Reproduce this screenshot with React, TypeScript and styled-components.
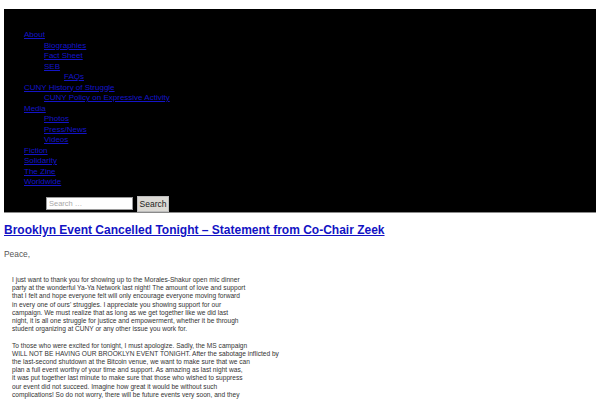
import React from "react";
import styled, { createGlobalStyle } from "styled-components";

type NavItem = { label: string; level: number };

const navItems: NavItem[] = [
  { label: "About", level: 0 },
  { label: "Biographies", level: 1 },
  { label: "Fact Sheet", level: 1 },
  { label: "SEB", level: 1 },
  { label: "FAQs", level: 2 },
  { label: "CUNY History of Struggle", level: 0 },
  { label: "CUNY Policy on Expressive Activity", level: 1 },
  { label: "Media", level: 0 },
  { label: "Photos", level: 1 },
  { label: "Press/News", level: 1 },
  { label: "Videos", level: 1 },
  { label: "Fiction", level: 0 },
  { label: "Solidarity", level: 0 },
  { label: "The Zine", level: 0 },
  { label: "Worldwide", level: 0 },
];

const paragraphs: string[][] = [
  [
    "I just want to thank you for showing up to the Morales-Shakur open mic dinner",
    "party at the wonderful Ya-Ya Network last night! The amount of love and support",
    "that I felt and hope everyone felt will only encourage everyone moving forward",
    "in every one of ours' struggles. I appreciate you showing support for our",
    "campaign. We must realize that as long as we get together like we did last",
    "night, it is all one struggle for justice and empowerment, whether it be through",
    "student organizing at CUNY or any other issue you work for.",
  ],
  [
    "To those who were excited for tonight, I must apologize. Sadly, the MS campaign",
    "WILL NOT BE HAVING OUR BROOKLYN EVENT TONIGHT. After the sabotage inflicted by",
    "the last-second shutdown at the Bitcoin venue, we want to make sure that we can",
    "plan a full event worthy of your time and support. As amazing as last night was,",
    "it was put together last minute to make sure that those who wished to suppress",
    "our event did not succeed. Imagine how great it would be without such",
    "complications! So do not worry, there will be future events very soon, and they",
  ],
];

const App: React.FC<{}> = () => {
  return (
    <Page>
      <GlobalStyle />
      <Header>
        <NavList>
          {navItems.map((item) => {
            return (
              <NavEntry key={item.label} level={item.level}>
                <NavLink href="#">{item.label}</NavLink>
              </NavEntry>
            );
          })}
        </NavList>
        <SearchForm>
          <SearchInput placeholder="Search …" />
          <SearchButton type="button">Search</SearchButton>
        </SearchForm>
      </Header>
      <Article>
        <Title>
          <TitleLink href="#">
            Brooklyn Event Cancelled Tonight – Statement from Co-Chair Zeek
          </TitleLink>
        </Title>
        <Greeting>Peace,</Greeting>
        <Body>
          {paragraphs.map((lines, i) => {
            return (
              <Paragraph key={i}>
                {lines.map((line) => {
                  return <Line key={line}>{line}</Line>;
                })}
              </Paragraph>
            );
          })}
        </Body>
      </Article>
    </Page>
  );
};

export default App;

const GlobalStyle = createGlobalStyle`
  html, body {
    margin: 0;
    padding: 0;
    background: #ffffff;
    font-family: "Liberation Sans", Arial, sans-serif;
  }
`;

const Page = styled.div`
  width: 600px;
  height: 400px;
  overflow: hidden;
  padding-top: 9px;
  box-sizing: border-box;
`;

const Header = styled.header`
  margin: 0 4px;
  height: 204px;
  box-sizing: border-box;
  background: #000000;
  border-bottom: 1px solid #8a8a8a;
  padding-top: 21px;
`;

const NavList = styled.ul`
  list-style: none;
  margin: 0;
  padding: 0 0 0 20px;
`;

const NavEntry = styled.li<{ level: number }>`
  padding-left: ${(p) => p.level * 20}px;
  font-size: 8px;
  line-height: 10.5px;
  height: 10.5px;
  white-space: nowrap;
`;

const NavLink = styled.a`
  color: #1414c8;
  text-decoration: underline;
`;

const SearchForm = styled.form`
  display: flex;
  align-items: center;
  gap: 4px;
  margin: 8px 0 0 42px;
`;

const SearchInput = styled.input`
  width: 87px;
  height: 13px;
  box-sizing: border-box;
  border: 1px solid #9a9a9a;
  background: #ffffff;
  padding: 0 2px;
  font-family: "Liberation Sans", Arial, sans-serif;
  font-size: 7.5px;
  &::placeholder {
    color: #a8a8a8;
  }
`;

const SearchButton = styled.button`
  width: 32px;
  height: 16px;
  box-sizing: border-box;
  border: 1px solid #bdbdbd;
  background: #dcdad5;
  padding: 0;
  font-family: "Liberation Sans", Arial, sans-serif;
  font-size: 8.5px;
  color: #222222;
`;

const Article = styled.article`
  padding: 0 4px;
`;

const Title = styled.h1`
  margin: 10px 0 0;
  font-size: 12px;
  line-height: 14px;
  font-weight: bold;
  white-space: nowrap;
`;

const TitleLink = styled.a`
  color: #1313c4;
  text-decoration: underline;
`;

const Greeting = styled.p`
  margin: 12px 0 0;
  font-size: 8.4px;
  line-height: 10px;
  color: #555555;
`;

const Body = styled.div`
  margin-top: 17px;
  padding-left: 8px;
  color: #333333;
  font-size: 6.6px;
  line-height: 8.2px;
  white-space: nowrap;
`;

const Paragraph = styled.p`
  margin: 0 0 8.2px;
`;

const Line = styled.span`
  display: block;
`;
